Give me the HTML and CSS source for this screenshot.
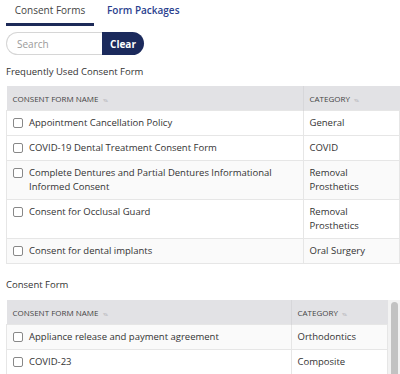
FILE: index.html
```html
<!DOCTYPE html>
<html lang="en">
<head>
    <meta charset="UTF-8">
    <meta name="viewport" content="width=device-width, initial-scale=1.0">
    <title>Consent Forms</title>
    <link rel="stylesheet" href="styles.css">
</head>
<body>
    <div class="tabs">
        <div class="tab active">Consent Forms</div>
        <div class="tab">Form Packages</div>
    </div>

    <div class="search">
        <input type="text" placeholder="Search">
        <button>Clear</button>
    </div>

    <h2 class="section-title">Frequently Used Consent Form</h2>
    <table class="forms">
        <thead>
            <tr>
                <th class="col-name">Consent Form Name <span class="sort">▾▴</span></th>
                <th class="col-cat">Category <span class="sort">▾▴</span></th>
            </tr>
        </thead>
        <tbody>
            <tr>
                <td><label><span class="box"></span>Appointment Cancellation Policy</label></td>
                <td>General</td>
            </tr>
            <tr>
                <td><label><span class="box"></span>COVID-19 Dental Treatment Consent Form</label></td>
                <td>COVID</td>
            </tr>
            <tr>
                <td><label><span class="box"></span>Complete Dentures and Partial Dentures Informational Informed Consent</label></td>
                <td>Removal Prosthetics</td>
            </tr>
            <tr>
                <td><label><span class="box"></span>Consent for Occlusal Guard</label></td>
                <td>Removal Prosthetics</td>
            </tr>
            <tr>
                <td><label><span class="box"></span>Consent for dental implants</label></td>
                <td>Oral Surgery</td>
            </tr>
        </tbody>
    </table>

    <h2 class="section-title second">Consent Form</h2>
    <div class="scroll-wrap">
        <table class="forms all">
            <thead>
                <tr>
                    <th class="col-name">Consent Form Name <span class="sort">▾▴</span></th>
                    <th class="col-cat2">Category <span class="sort">▾▴</span></th>
                </tr>
            </thead>
            <tbody>
                <tr>
                    <td><label><span class="box"></span>Appliance release and payment agreement</label></td>
                    <td>Orthodontics</td>
                </tr>
                <tr>
                    <td><label><span class="box"></span>COVID-23</label></td>
                    <td>Composite</td>
                </tr>
            </tbody>
        </table>
        <div class="scrollbar"><div class="thumb"></div></div>
    </div>
</body>
</html>
```

FILE: styles.css
```css
body {
    font-family: "Open Sans", "Liberation Sans", sans-serif;
    color: #333;
    margin: 0;
    padding: 0 0 0 6px;
    background-color: white;
    overflow: hidden;
    height: 374px;
}
.tabs {
    display: flex;
    height: 26px;
}
.tab {
    font-size: 10px;
    padding: 3px 0 0 13px;
    color: #2a3f8f;
    font-weight: 600;
    white-space: nowrap;
}
.tab.active {
    color: #444;
    font-weight: 400;
    width: 88px;
    padding: 3px 0 0 0;
    text-align: center;
    border-bottom: 3px solid #1d2a58;
    box-sizing: border-box;
    height: 26px;
}
.search {
    display: flex;
    margin-top: 6px;
    height: 23px;
}
.search input {
    width: 96px;
    box-sizing: border-box;
    border: 1px solid #d6d6d6;
    border-right: none;
    border-radius: 12px 0 0 12px;
    padding: 0 10px;
    font-family: inherit;
    font-size: 10px;
    outline: none;
}
.search input::placeholder {
    color: #9a9a9a;
}
.search button {
    width: 42px;
    background-color: #1b2a5c;
    color: white;
    border: none;
    border-radius: 0 12px 12px 0;
    font-family: inherit;
    font-weight: 700;
    font-size: 10px;
    padding: 0;
}
.section-title {
    font-size: 9.5px;
    font-weight: 500;
    color: #333;
    margin: 10px 0 7px 0;
    line-height: 14px;
}
.section-title.second {
    margin-top: 14px;
    margin-bottom: 8px;
}
.forms {
    border-collapse: collapse;
    width: 394px;
    font-size: 9.5px;
}
.forms th {
    background-color: #e2e2e5;
    text-transform: uppercase;
    text-align: left;
    font-size: 8px;
    font-weight: 500;
    color: #444;
    height: 24px;
    padding: 0 6px;
    border-left: 1px solid #d7d7da;
}
.forms th:first-child {
    border-left: none;
}
.sort {
    color: #c8c8cc;
    font-size: 6px;
    letter-spacing: -1px;
    margin-left: 2px;
}
.forms td {
    padding: 5px 6px;
    line-height: 14px;
    border: 1px solid #e6e6e6;
    vertical-align: top;
}
.forms tbody tr:nth-child(odd) td {
    background-color: #fafafa;
}
.forms tbody tr:nth-child(1) td {
    background-color: white;
}
.forms.all tbody tr:nth-child(1) td {
    background-color: #fafafa;
}
.col-cat {
    width: 84px;
}
.col-cat2 {
    width: 84px;
}
label {
    display: flex;
    align-items: flex-start;
}
.box {
    flex: none;
    width: 8px;
    height: 8px;
    border: 1px solid #888;
    border-radius: 2px;
    margin: 2px 6px 0 0;
    background-color: white;
}
.scroll-wrap {
    display: flex;
    align-items: flex-start;
    width: 394px;
}
.forms.all {
    width: 382px;
}
.scrollbar {
    width: 12px;
    height: 80px;
    background-color: #f2f2f2;
    display: flex;
    justify-content: center;
    padding-top: 2px;
}
.thumb {
    width: 7px;
    height: 78px;
    background-color: #c2c2c2;
    border-radius: 4px;
}
```
